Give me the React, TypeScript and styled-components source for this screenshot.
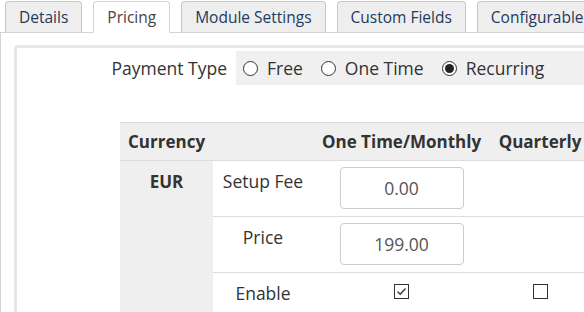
import React from "react";
import styled, { createGlobalStyle } from "styled-components";

const GlobalStyle = createGlobalStyle`
  html, body {
    margin: 0;
    padding: 0;
    background: #ffffff;
    overflow: hidden;
  }
  body {
    font-family: "Open Sans", "Liberation Sans", sans-serif;
    font-size: 17.5px;
    color: #333333;
  }
`;

const tabs = ["Details", "Pricing", "Module Settings", "Custom Fields", "Configurable Options"];

export default function App() {
  return (
    <Page>
      <GlobalStyle />
      <TabBar>
        {tabs.map((t) => (
          <Tab key={t} $active={t === "Pricing"}>{t}</Tab>
        ))}
      </TabBar>
      <TabPane>
        <InnerBox>
          <FormRow>
            <FieldLabel>Payment Type</FieldLabel>
            <FieldArea>
              <RadioOption><Radio /> Free</RadioOption>
              <RadioOption><Radio /> One Time</RadioOption>
              <RadioOption><Radio $checked /> Recurring</RadioOption>
            </FieldArea>
          </FormRow>
          <PricingTable>
            <colgroup>
              <col style={{ width: 93 }} />
              <col style={{ width: 100 }} />
              <col style={{ width: 177 }} />
              <col style={{ width: 100 }} />
              <col style={{ width: 100 }} />
            </colgroup>
            <thead>
              <tr>
                <HeadCell $align="left">Currency</HeadCell>
                <HeadCell />
                <HeadCell>One Time/Monthly</HeadCell>
                <HeadCell>Quarterly</HeadCell>
                <HeadCell>Semi-Annually</HeadCell>
              </tr>
            </thead>
            <tbody>
              <tr>
                <CurrencyCell rowSpan={3}>EUR</CurrencyCell>
                <LabelCell>Setup Fee</LabelCell>
                <ValueCell><PriceInput defaultValue="0.00" /></ValueCell>
                <ValueCell />
                <ValueCell />
              </tr>
              <tr>
                <LabelCell>Price</LabelCell>
                <ValueCell><PriceInput defaultValue="199.00" /></ValueCell>
                <ValueCell />
                <ValueCell />
              </tr>
              <tr>
                <LabelCell>Enable</LabelCell>
                <ValueCell $check><CheckBox $checked /></ValueCell>
                <ValueCell $check><CheckBox /></ValueCell>
                <ValueCell $check><CheckBox /></ValueCell>
              </tr>
            </tbody>
          </PricingTable>
        </InnerBox>
      </TabPane>
    </Page>
  );
}

function Radio({ $checked }: { $checked?: boolean }) {
  return <RadioCircle>{$checked && <RadioDot />}</RadioCircle>;
}

function CheckBox({ $checked }: { $checked?: boolean }) {
  return (
    <Box>
      {$checked && (
        <svg width="13" height="13" viewBox="0 0 13 13">
          <path d="M2.5 6.5 L5.2 9.2 L10.5 3.5" fill="none" stroke="#333" strokeWidth="1.3" />
        </svg>
      )}
    </Box>
  );
}

const Page = styled.div`
  width: 700px;
`;

const TabBar = styled.div`
  display: flex;
  align-items: flex-end;
  gap: 11px;
  padding-left: 5px;
  height: 32px;
  border-bottom: 1px solid #d4d4d4;
`;

const Tab = styled.div<{ $active?: boolean }>`
  flex: none;
  height: 30px;
  margin-bottom: -1px;
  padding: 0 13px;
  display: flex;
  align-items: center;
  font-size: 15.5px;
  white-space: nowrap;
  border: 1px solid ${(p) => (p.$active ? "#d4d4d4" : "#c8c8c8")};
  border-bottom-color: ${(p) => (p.$active ? "#ffffff" : "#d4d4d4")};
  border-radius: 4px 4px 0 0;
  background: ${(p) => (p.$active ? "#ffffff" : "#eeeeee")};
  color: ${(p) => (p.$active ? "#444444" : "#23395d")};
`;

const TabPane = styled.div`
  border-left: 1px solid #d4d4d4;
  padding: 12px 0 0 13px;
  height: 300px;
`;

const InnerBox = styled.div`
  border: 3px solid #e4e7eb;
  border-right: none;
  border-bottom: none;
  border-radius: 4px 0 0 0;
  padding-top: 3px;
  height: 300px;
`;

const FormRow = styled.div`
  display: grid;
  grid-template-columns: 219px 1fr;
  height: 34px;
`;

const FieldLabel = styled.div`
  display: flex;
  align-items: center;
  justify-content: flex-end;
  padding-right: 9px;
  color: #333;
`;

const FieldArea = styled.div`
  display: flex;
  align-items: center;
  padding-left: 7px;
  background: #f0f0f0;
`;

const RadioOption = styled.label`
  display: flex;
  align-items: center;
  gap: 9px;
  margin-right: 18px;
  white-space: nowrap;
  color: #333;
`;

const RadioCircle = styled.span`
  box-sizing: border-box;
  width: 15px;
  height: 15px;
  border: 1px solid #333;
  border-radius: 50%;
  background: #fff;
  display: flex;
  align-items: center;
  justify-content: center;
`;

const RadioDot = styled.span`
  width: 9px;
  height: 9px;
  border-radius: 50%;
  background: #222;
`;

const PricingTable = styled.table`
  margin: 37px 0 0 103px;
  border-collapse: collapse;
  table-layout: fixed;
  width: 570px;
`;

const HeadCell = styled.th<{ $align?: string }>`
  height: 37px;
  padding: 0 8px;
  background: #efefef;
  border-top: 1px solid #dddddd;
  border-bottom: 1px solid #dddddd;
  text-align: ${(p) => p.$align || "center"};
  font-size: 17px;
  font-weight: 700;
  color: #333;
  white-space: nowrap;
`;

const CurrencyCell = styled.td`
  background: #efefef;
  text-align: center;
  vertical-align: top;
  padding-top: 9px;
  font-size: 17px;
  font-weight: 700;
  color: #333;
`;

const LabelCell = styled.td`
  padding: 8px 0 0;
  vertical-align: top;
  text-align: center;
  border-bottom: 1px solid #dddddd;
  color: #333;
  white-space: nowrap;
`;

const ValueCell = styled.td<{ $check?: boolean }>`
  height: 55px;
  box-sizing: border-box;
  padding: ${(p) => (p.$check ? "11px 0 0" : "6px 0 7px")};
  vertical-align: top;
  text-align: center;
  border-bottom: 1px solid #dddddd;
  line-height: 0;
`;

const PriceInput = styled.input`
  box-sizing: border-box;
  width: 124px;
  height: 42px;
  margin: 0;
  border: 1px solid #cccccc;
  border-radius: 4px;
  text-align: center;
  font-family: "Open Sans", "Liberation Sans", sans-serif;
  font-size: 17.5px;
  color: #555;
  outline: none;
`;

const Box = styled.span`
  display: inline-flex;
  align-items: center;
  justify-content: center;
  box-sizing: border-box;
  width: 15px;
  height: 15px;
  border: 1px solid #333;
  background: #fff;
`;
